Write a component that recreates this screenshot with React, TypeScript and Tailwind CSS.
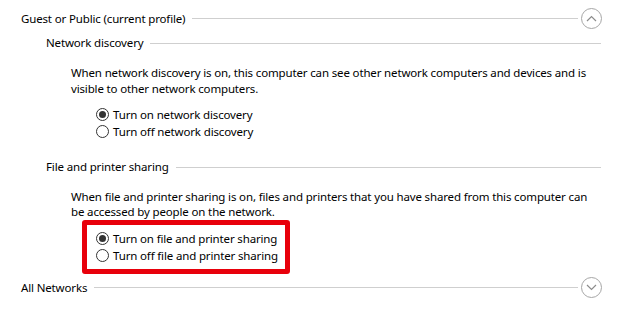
import React from 'react';

const Radio = ({ checked, label }: { checked?: boolean; label: string }) => (
  <div className="flex items-center h-[17px] gap-[4px]">
    <span className="w-[13px] h-[13px] shrink-0 rounded-full border border-[#333333] flex items-center justify-center bg-white">
      {checked && <span className="w-[7px] h-[7px] rounded-full bg-[#333333]" />}
    </span>
    <span className="whitespace-nowrap">{label}</span>
  </div>
);

const Chevron = ({ up }: { up?: boolean }) => (
  <span className="w-[21px] h-[21px] rounded-full border border-[#a6a6a6] flex items-center justify-center shrink-0">
    <svg width="11" height="7" viewBox="0 0 11 7" fill="none" stroke="#8c8c8c" strokeWidth="1.2">
      {up ? <path d="M1 6 L5.5 1.5 L10 6" /> : <path d="M1 1 L5.5 5.5 L10 1" />}
    </svg>
  </span>
);

export default function App() {
  return (
    <div
      className="w-[621px] h-[319px] bg-white text-black text-[11.5px] tracking-[-0.15px] leading-[16px] overflow-hidden relative"
      style={{ fontFamily: '"Segoe UI", "Noto Sans", sans-serif' }}
    >
      {/* Guest or Public */}
      <div className="flex items-center pl-[21px] pr-[19px] mt-[8px]">
        <span className="whitespace-nowrap">Guest or Public (current profile)</span>
        <div className="flex-1 h-px bg-[#cfcfcf] ml-[7px] mr-[3px]" />
        <Chevron up />
      </div>

      <div className="flex items-center pl-[46px] pr-[20px] mt-[6px]">
        <span className="whitespace-nowrap">Network discovery</span>
        <div className="flex-1 h-px bg-[#cfcfcf] ml-[7px]" />
      </div>

      <p className="pl-[71px] mt-[14px] whitespace-nowrap">
        When network discovery is on, this computer can see other network computers and devices and is
        <br />
        visible to other network computers.
      </p>

      <div className="pl-[96px] mt-[9px]">
        <Radio checked label="Turn on network discovery" />
        <Radio label="Turn off network discovery" />
      </div>

      <div className="flex items-center pl-[46px] pr-[20px] mt-[19px]">
        <span className="whitespace-nowrap">File and printer sharing</span>
        <div className="flex-1 h-px bg-[#cfcfcf] ml-[7px]" />
      </div>

      <p className="pl-[71px] mt-[14px] leading-[15px] whitespace-nowrap">
        When file and printer sharing is on, files and printers that you have shared from this computer can
        <br />
        be accessed by people on the network.
      </p>

      {/* highlighted options */}
      <div className="ml-[82px] mt-[1px] w-fit border-[5px] border-[#e8000b] rounded-[3px] pl-[9px] pr-[7px] pt-[5px] pb-[5px]">
        <Radio checked label="Turn on file and printer sharing" />
        <Radio label="Turn off file and printer sharing" />
      </div>

      <div className="flex items-center pl-[21px] pr-[19px] mt-[3px]">
        <span className="whitespace-nowrap">All Networks</span>
        <div className="flex-1 h-px bg-[#cfcfcf] ml-[7px] mr-[3px]" />
        <Chevron />
      </div>
    </div>
  );
}
